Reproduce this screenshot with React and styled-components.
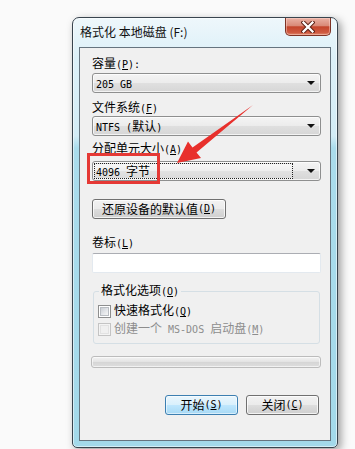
import React from 'react';
import styled, { createGlobalStyle, css } from 'styled-components';

const Global = createGlobalStyle`
  html, body { margin: 0; padding: 0; background: #fafafa; }
  body {
    width: 355px; height: 449px; overflow: hidden;
    font-family: "Noto Sans CJK SC", "Noto Sans", sans-serif;
    color: #000;
  }
  * { box-sizing: border-box; }
`;

const Page = styled.div`
  position: relative;
  width: 355px;
  height: 449px;
  padding: 17px 0 0 72px;
`;

const Window = styled.div`
  width: 266px;
  height: 431px;
  border: 1px solid #38444e;
  border-radius: 7px 7px 5px 5px;
  background: linear-gradient(180deg, #eef7fb 0px, #dcf0f8 40px, #d3ecf6 118px, #aadcec 130px, #a3d9ea 100%);
  box-shadow: 3px 3px 8px rgba(0, 0, 0, 0.38), inset 0 0 0 1px rgba(255, 255, 255, 0.55);
  display: flex;
  flex-direction: column;
`;

const TitleBar = styled.div`
  height: 29px;
  display: flex;
  justify-content: space-between;
  align-items: flex-start;
  padding: 0 6px 0 7px;
`;

const Title = styled.div`
  padding-top: 6px;
  font-size: 12px;
  line-height: 16px;
  color: #111;
`;

const CloseButton = styled.div`
  width: 46px;
  height: 18px;
  border: 1px solid #7d3224;
  border-top: none;
  border-radius: 0 0 5px 5px;
  background: linear-gradient(180deg, #eab1a4 0%, #d98a78 45%, #c4452c 52%, #cf5a40 85%, #e08a6e 100%);
  box-shadow: inset 0 0 0 1px rgba(255, 220, 210, 0.45);
  display: flex;
  align-items: center;
  justify-content: center;
`;

const Client = styled.div`
  margin: 0 6px;
  height: 394px;
  border: 1px solid #66747f;
  background: #f0f0f0;
  padding: 8px 10px 0 12px;
  display: flex;
  flex-direction: column;
`;

const Label = styled.div`
  font-size: 12px;
  line-height: 14px;
  height: 14px;
  margin-top: ${p => p.$mt || 0}px;
  white-space: nowrap;
`;

const Latin = styled.span`
  font-family: "DejaVu Sans Mono", "Liberation Mono", monospace;
  font-size: 10px;
  white-space: pre;
`;

const MnWrap = styled.span`
  font-family: "DejaVu Sans Mono", "Liberation Mono", monospace;
  font-size: 10px;
  u { text-underline-offset: 1px; }
`;

const Mn = ({ k }) => (
  <MnWrap>(<u>{k}</u>)</MnWrap>
);

const Combo = styled.div`
  margin-top: ${p => p.$mt || 0}px;
  width: 229px;
  height: 20px;
  border: 1px solid #8e8f8f;
  border-radius: 3px;
  background: linear-gradient(180deg, #f4f4f4 0%, #ececec 48%, #dfdfdf 52%, #d6d6d6 100%);
  box-shadow: inset 0 0 0 1px rgba(255, 255, 255, 0.7);
  display: flex;
  align-items: center;
  padding: 0 2px 0 1px;
  font-size: 12px;
`;

const ComboText = styled.div`
  flex: 1;
  height: 16px;
  line-height: 16px;
  padding-left: 2px;
  white-space: nowrap;
  ${p => p.$focused && css`
    border: 1px dotted #222;
    line-height: 14px;
    padding-left: 1px;
    margin-right: 10px;
    background: linear-gradient(180deg, #f7f7f7 0%, #eeeeee 50%, #e2e2e2 51%, #dcdcdc 100%);
  `}
`;

const DropArrow = styled.div`
  width: 0;
  height: 0;
  margin: 0 3px 0 4px;
  border-left: 4px solid transparent;
  border-right: 4px solid transparent;
  border-top: 4px solid #111;
`;

const Button = styled.div`
  margin-top: ${p => p.$mt || 0}px;
  width: ${p => p.$w}px;
  height: 20px;
  border: 1px solid ${p => (p.$default ? '#3c7fb1' : '#707070')};
  border-radius: 3px;
  background: ${p => p.$default
    ? 'linear-gradient(180deg, #eaf6fd 0%, #d9f0fc 48%, #bee6fd 52%, #a7d9f5 100%)'
    : 'linear-gradient(180deg, #f2f2f2 0%, #ebebeb 48%, #dddddd 52%, #cfcfcf 100%)'};
  box-shadow: inset 0 0 0 1px ${p => (p.$default ? 'rgba(255,255,255,0.55)' : 'rgba(255,255,255,0.75)')};
  display: flex;
  align-items: center;
  justify-content: center;
  font-size: 12px;
  line-height: 14px;
  white-space: nowrap;
`;

const TextInput = styled.div`
  margin-top: ${p => p.$mt || 0}px;
  width: 229px;
  height: 20px;
  background: #fff;
  border: 1px solid #e3e9ef;
  border-top-color: #abadb3;
  border-radius: 2px;
`;

const Group = styled.fieldset`
  margin: 10px 0 0 1px;
  width: 227px;
  border: 1px solid #d5dfe5;
  border-radius: 3px;
  padding: 0 4px 7px 4px;
  display: flex;
  flex-direction: column;
  min-width: 0;
`;

const Legend = styled.legend`
  font-size: 12px;
  line-height: 14px;
  padding: 0 2px;
  margin-left: 1px;
  white-space: nowrap;
`;

const CheckRow = styled.div`
  margin-top: ${p => p.$mt || 0}px;
  display: flex;
  align-items: center;
  gap: 3px;
  height: 14px;
  font-size: 12px;
  line-height: 14px;
  white-space: nowrap;
  color: ${p => (p.$disabled ? '#8d8d8d' : '#000')};
`;

const Box = styled.span`
  width: 13px;
  height: 13px;
  flex: none;
  border: 1px solid ${p => (p.$disabled ? '#c4c4c4' : '#8e8f8f')};
  background: ${p => (p.$disabled ? '#f4f4f4' : '#fff')};
  padding: 1px;
  display: flex;
  &::after {
    content: '';
    flex: 1;
    background: ${p => (p.$disabled
      ? '#f0f0f0'
      : 'linear-gradient(135deg, #cbcfd5 0%, #e6e8eb 60%, #f6f6f6 100%)')};
    border: 1px solid ${p => (p.$disabled ? '#e2e2e2' : '#b9bdc2')};
  }
`;

const Progress = styled.div`
  margin-top: 12px;
  width: 230px;
  margin-left: -1px;
  height: 12px;
  border: 1px solid #bcbcbc;
  border-radius: 3px;
  background: linear-gradient(180deg, #f3f3f3 0%, #e4e4e4 45%, #d6d6d6 55%, #dedede 100%);
  box-shadow: inset 0 0 0 1px rgba(255, 255, 255, 0.6);
`;

const ButtonRow = styled.div`
  margin-top: 27px;
  display: flex;
  justify-content: flex-end;
  gap: 8px;
  padding-right: 1px;
`;

const Annotation = styled.svg`
  position: absolute;
  left: 0;
  top: 0;
  width: 355px;
  height: 449px;
  pointer-events: none;
`;

export default function App() {
  return (
    <Page>
      <Global />
      <Window>
        <TitleBar>
          <Title>格式化 本地磁盘 (F:)</Title>
          <CloseButton>
            <svg width="14" height="12" viewBox="0 0 14 12">
              <path d="M2.5 1.5 L11.5 10.5 M11.5 1.5 L2.5 10.5" stroke="#5a1f14" strokeWidth="4.2" strokeLinecap="square" />
              <path d="M2.5 1.5 L11.5 10.5 M11.5 1.5 L2.5 10.5" stroke="#fff" strokeWidth="2.3" strokeLinecap="square" />
            </svg>
          </CloseButton>
        </TitleBar>
        <Client>
          <Label>容量<Mn k="P" /><Latin>:</Latin></Label>
          <Combo $mt={3}>
            <ComboText><Latin>205 GB</Latin></ComboText>
            <DropArrow />
          </Combo>
          <Label $mt={7}>文件系统<Mn k="F" /></Label>
          <Combo $mt={2}>
            <ComboText><Latin>NTFS (</Latin>默认<Latin>)</Latin></ComboText>
            <DropArrow />
          </Combo>
          <Label $mt={5}>分配单元大小<Mn k="A" /></Label>
          <Combo $mt={6}>
            <ComboText $focused><Latin>4096 </Latin>字节</ComboText>
            <DropArrow />
          </Combo>
          <Button $mt={18} $w={134}>还原设备的默认值<Mn k="D" /></Button>
          <Label $mt={16}>卷标<Mn k="L" /></Label>
          <TextInput $mt={4} />
          <Group>
            <Legend>格式化选项<Mn k="O" /></Legend>
            <CheckRow $mt={5}>
              <Box />
              <span>快速格式化<Mn k="Q" /></span>
            </CheckRow>
            <CheckRow $mt={4} $disabled>
              <Box $disabled />
              <span>创建一个<Latin> MS-DOS </Latin>启动盘<Mn k="M" /></span>
            </CheckRow>
          </Group>
          <Progress />
          <ButtonRow>
            <Button $w={73} $default>开始<Mn k="S" /></Button>
            <Button $w={73}>关闭<Mn k="C" /></Button>
          </ButtonRow>
        </Client>
      </Window>
      <Annotation viewBox="0 0 355 449">
        <rect x="88.5" y="154.5" width="70" height="28" fill="none" stroke="#e53935" strokeWidth="3" />
        <polygon
          points="253,105 196.5,152.5 201,158 177,163 188,141.5 192.5,147.5"
          fill="#e8302c"
        />
      </Annotation>
    </Page>
  );
}
